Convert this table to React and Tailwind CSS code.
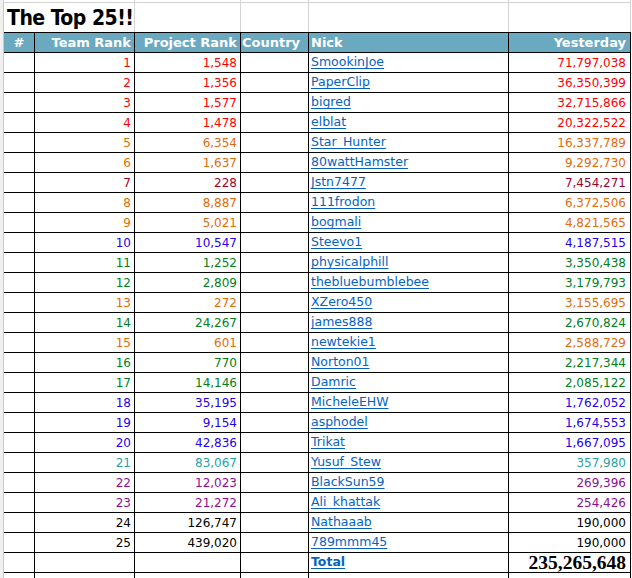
const rows = [
  [1, '1,548', 'SmookinJoe', '71,797,038', 'red'],
  [2, '1,356', 'PaperClip', '36,350,399', 'red'],
  [3, '1,577', 'bigred', '32,715,866', 'red'],
  [4, '1,478', 'elblat', '20,322,522', 'red'],
  [5, '6,354', 'Star_Hunter', '16,337,789', 'orange'],
  [6, '1,637', '80wattHamster', '9,292,730', 'orange'],
  [7, '228', 'Jstn7477', '7,454,271', 'maroon'],
  [8, '8,887', '111frodon', '6,372,506', 'orange'],
  [9, '5,021', 'bogmali', '4,821,565', 'orange'],
  [10, '10,547', 'Steevo1', '4,187,515', 'blue'],
  [11, '1,252', 'physicalphill', '3,350,438', 'green'],
  [12, '2,809', 'thebluebumblebee', '3,179,793', 'green'],
  [13, '272', 'XZero450', '3,155,695', 'orange'],
  [14, '24,267', 'james888', '2,670,824', 'green'],
  [15, '601', 'newtekie1', '2,588,729', 'orange'],
  [16, '770', 'Norton01', '2,217,344', 'green'],
  [17, '14,146', 'Damric', '2,085,122', 'green'],
  [18, '35,195', 'MicheleEHW', '1,762,052', 'blue'],
  [19, '9,154', 'asphodel', '1,674,553', 'blue'],
  [20, '42,836', 'Trikat', '1,667,095', 'blue'],
  [21, '83,067', 'Yusuf_Stew', '357,980', 'teal'],
  [22, '12,023', 'BlackSun59', '269,396', 'purple'],
  [23, '21,272', 'Ali_khattak', '254,426', 'purple'],
  [24, '126,747', 'Nathaaab', '190,000', 'black'],
  [25, '439,020', '789mmm45', '190,000', 'black'],
];

const tones = {
  red: 'text-[#ff0000]',
  orange: 'text-[#e26b0a]',
  maroon: 'text-[#a0002a]',
  blue: 'text-[#1f00e8]',
  green: 'text-[#00801a]',
  teal: 'text-[#1fa3a8]',
  purple: 'text-[#8f0d8f]',
  black: 'text-black',
};

const cell = 'h-full flex items-center border-r border-black';

export default function App() {
  return (
    <div className="w-[632px] h-[578px] overflow-hidden bg-white flex items-start font-['DejaVu_Sans',sans-serif]">
      <div className="w-[4px] h-full shrink-0 border-r border-[#c8c8c8] bg-[#f0f0f0]" />
      <div className="flex flex-col w-[627px] shrink-0">
        <div className="h-[33px] shrink-0 flex flex-col border-b border-black">
          <div className="h-[3px] shrink-0 border-b border-[#d4d4d4] flex">
            <div className="w-[131px] border-r border-[#d4d4d4]" />
            <div className="w-[106px] border-r border-[#d4d4d4]" />
            <div className="w-[68px] border-r border-[#d4d4d4]" />
            <div className="w-[200px] border-r border-[#d4d4d4]" />
            <div className="w-[122px] border-r border-[#d4d4d4]" />
          </div>
          <div className="flex-1 flex">
            <div className="w-[131px] border-r border-[#d4d4d4] pl-[3px] flex items-end pb-[1px]">
              <span className="whitespace-nowrap text-[21px] leading-[26px] tracking-[-0.5px] font-bold text-black font-['DejaVu_Sans_Condensed','DejaVu_Sans',sans-serif]">
                The Top 25!!
              </span>
            </div>
            <div className="w-[106px] border-r border-[#d4d4d4]" />
            <div className="w-[68px] border-r border-[#d4d4d4]" />
            <div className="w-[200px] border-r border-[#d4d4d4]" />
            <div className="w-[122px] border-r border-[#d4d4d4]" />
          </div>
        </div>

        <div className="h-[20px] shrink-0 flex border-b border-black bg-[#6aa9bf] text-white font-bold text-[13px]">
          <div className={`${cell} w-[31px] justify-center`}>#</div>
          <div className={`${cell} w-[100px] justify-end pr-[3px]`}>Team Rank</div>
          <div className={`${cell} w-[106px] justify-end pr-[3px]`}>Project Rank</div>
          <div className={`${cell} w-[68px] justify-start pl-[1px]`}>Country</div>
          <div className={`${cell} w-[200px] pl-[2px]`}>Nick</div>
          <div className={`${cell} w-[122px] justify-end pr-[4px]`}>Yesterday</div>
        </div>

        {rows.map(([rank, project, nick, yesterday, tone]) => (
          <div key={rank} className={`h-[20px] shrink-0 flex border-b border-black text-[12px] ${tones[tone]}`}>
            <div className={`${cell} w-[31px]`} />
            <div className={`${cell} w-[100px] justify-end pr-[3px]`}>{rank}</div>
            <div className={`${cell} w-[106px] justify-end pr-[3px]`}>{project}</div>
            <div className={`${cell} w-[68px]`} />
            <div className={`${cell} w-[200px] pl-[2px]`}>
              <a href="#" className="text-[12.5px] text-[#0563c1] underline underline-offset-[2px]">{nick}</a>
            </div>
            <div className={`${cell} w-[122px] justify-end pr-[4px]`}>{yesterday}</div>
          </div>
        ))}

        <div className="h-[20px] shrink-0 flex border-b border-black">
          <div className={`${cell} w-[31px]`} />
          <div className={`${cell} w-[100px]`} />
          <div className={`${cell} w-[106px]`} />
          <div className={`${cell} w-[68px]`} />
          <div className={`${cell} w-[200px] pl-[2px]`}>
            <a href="#" className="text-[12.5px] font-bold text-[#0563c1] underline underline-offset-[2px]">Total</a>
          </div>
          <div className={`${cell} w-[122px] justify-end pr-[4px]`}>
            <span className="text-[19.5px] font-bold text-black font-['Liberation_Serif',serif] leading-none">235,265,648</span>
          </div>
        </div>

        <div className="h-[10px] shrink-0 flex">
          <div className="w-[31px] border-r border-black" />
          <div className="w-[100px] border-r border-black" />
          <div className="w-[106px] border-r border-black" />
          <div className="w-[68px] border-r border-black" />
          <div className="w-[200px] border-r border-black" />
          <div className="w-[122px] border-r border-black" />
        </div>
      </div>
    </div>
  );
}
